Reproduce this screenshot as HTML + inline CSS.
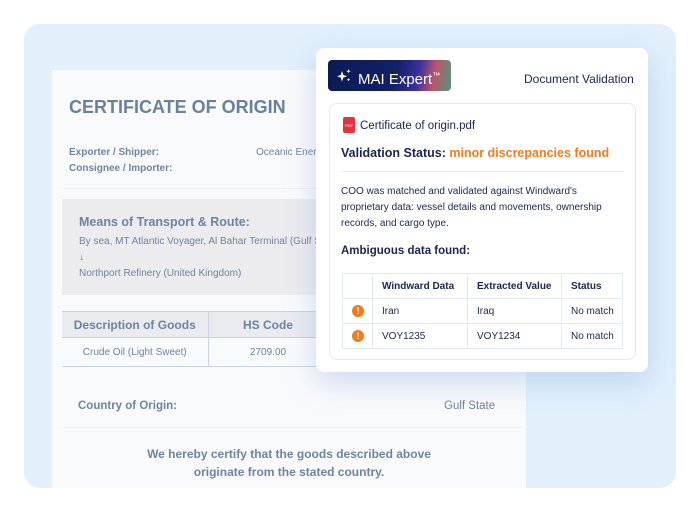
<!DOCTYPE html>
<html><head><style>
*{margin:0;padding:0;box-sizing:border-box}
body{width:700px;height:512px;background:#fff;font-family:"Liberation Sans",sans-serif;position:relative;overflow:hidden}
.outer{position:absolute;left:24px;top:24px;width:652px;height:464px;background:#e1f0fb;border-radius:16px;overflow:hidden}
.doc{position:absolute;left:28px;top:46px;width:474px;height:430px;background:#f9fafb;color:#6d84a0}
.abs{position:absolute;white-space:nowrap}
.pop{position:absolute;left:316px;top:48px;width:332px;height:324px;background:#fff;border-radius:8px;box-shadow:0 10px 30px rgba(120,160,220,.35)}
.inner{position:absolute;left:13px;top:55px;width:307px;height:257px;border:1px solid #e4e8ef;border-radius:8px}
.nav{color:#1b2550}
table{border-collapse:collapse}
.t2 td{border:1px solid #e4e8ef;font-size:10px;color:#1b2550;height:25px;padding-left:9px}
</style></head><body>
<div class="outer">
<div class="doc">
<div class="abs" style="left:17px;top:27px;font-size:18px;font-weight:bold;color:#6a819c">CERTIFICATE OF ORIGIN</div>
<div class="abs" style="left:17px;top:77px;font-size:10px;font-weight:bold">Exporter / Shipper:</div>
<div class="abs" style="left:17px;top:93px;font-size:10px;font-weight:bold">Consignee / Importer:</div>
<div class="abs" style="left:204px;top:77px;font-size:10px">Oceanic Energy</div>
<div class="abs" style="left:10px;top:118px;width:460px;border-top:1px solid #eef0f3"></div>
<div class="abs" style="left:10px;top:129px;width:460px;height:96px;background:#ececee"></div>
<div class="abs" style="left:27px;top:145px;font-size:12.5px;font-weight:bold">Means of Transport &amp; Route:</div>
<div class="abs" style="left:27px;top:166px;font-size:10px">By sea, MT Atlantic Voyager, Al Bahar Terminal (Gulf State)</div>
<div class="abs" style="left:27px;top:182px;font-size:10px">↓</div>
<div class="abs" style="left:27px;top:198px;font-size:10px">Northport Refinery (United Kingdom)</div>
<table class="abs" style="left:10px;top:241px;font-size:12px;color:#6d84a0">
<tr style="background:#e9ebef;height:26px"><td style="width:146px;text-align:center;font-weight:bold;border:1px solid #c9d3df;border-left:none">Description of Goods</td><td style="width:120px;text-align:center;font-weight:bold;border:1px solid #c9d3df">HS Code</td><td style="width:170px;border:1px solid #c9d3df"></td></tr>
<tr style="height:29px;font-size:10px"><td style="text-align:center;border:1px solid #c9d3df;border-left:none">Crude Oil (Light Sweet)</td><td style="text-align:center;border:1px solid #c9d3df">2709.00</td><td style="border:1px solid #c9d3df"></td></tr>
</table>
<div class="abs" style="left:26px;top:330px;font-size:11.5px;font-weight:bold">Country of Origin:</div>
<div class="abs" style="left:392px;top:330px;font-size:11.5px">Gulf State</div>
<div class="abs" style="left:10px;top:357px;width:460px;border-top:1px solid #eef0f3"></div>
<div class="abs" style="left:0;top:375px;width:474px;text-align:center;font-size:12px;font-weight:bold;line-height:18px;color:#6d84a0;white-space:normal">We hereby certify that the goods described above<br>originate from the stated country.</div>
</div>
</div>
<div class="pop">
<div class="abs" style="left:12px;top:12px;width:123px;height:31px;border-radius:4px;background:linear-gradient(100deg,#0b1b55 0%,#122066 55%,#3a2fa0 72%,#b9566a 85%,#4f9a7a 100%);color:#fff;font-size:15px;line-height:31px;padding-left:30px">MAI Expert<sup style="font-size:8px">™</sup>
<svg style="position:absolute;left:8px;top:8px" width="16" height="15" viewBox="0 0 16 15" fill="#fff"><path d="M6 3 L7.3 7 L11 8.3 L7.3 9.6 L6 13.5 L4.7 9.6 L1 8.3 L4.7 7Z"/><path d="M12.5 1 L13.1 2.6 L14.7 3.2 L13.1 3.8 L12.5 5.4 L11.9 3.8 L10.3 3.2 L11.9 2.6Z"/><path d="M12.5 10 L13 11.2 L14.2 11.7 L13 12.2 L12.5 13.4 L12 12.2 L10.8 11.7 L12 11.2Z"/></svg></div>
<div class="abs nav" style="left:208px;top:24px;font-size:12px">Document Validation</div>
<div class="inner">
<div class="abs" style="left:13px;top:13px;width:12px;height:16px;background:#e8313b;border-radius:2px;font-size:4px;color:#fff;padding-top:6px;text-align:center">PDF</div>
<div class="abs nav" style="left:30px;top:16px;font-size:11.5px">Certificate of origin.pdf</div>
<div class="abs nav" style="left:11px;top:42px;font-size:12.5px;font-weight:bold">Validation Status: <span style="color:#f57a1a">minor discrepancies found</span></div>
<div class="abs" style="left:11px;top:67px;width:283px;border-top:1px solid #e8ebf0"></div>
<div class="abs nav" style="left:11px;top:80px;font-size:10px;line-height:16px;white-space:normal;width:280px">COO was matched and validated against Windward's proprietary data: vessel details and movements, ownership records, and cargo type.</div>
<div class="abs nav" style="left:11px;top:141px;font-size:11.5px;font-weight:bold">Ambiguous data found:</div>
<table class="abs t2" style="left:12px;top:169px">
<tr style="font-weight:bold"><td style="width:30px"></td><td style="width:95px">Windward Data</td><td style="width:94px">Extracted Value</td><td style="width:61px">Status</td></tr>
<tr><td><span style="display:inline-block;width:12px;height:12px;border-radius:50%;background:#f57a1a;color:#fff;font-size:9px;font-weight:bold;text-align:center;line-height:12px">!</span></td><td>Iran</td><td>Iraq</td><td>No match</td></tr>
<tr><td><span style="display:inline-block;width:12px;height:12px;border-radius:50%;background:#f57a1a;color:#fff;font-size:9px;font-weight:bold;text-align:center;line-height:12px">!</span></td><td>VOY1235</td><td>VOY1234</td><td>No match</td></tr>
</table>
</div>
</div>
</body></html>
